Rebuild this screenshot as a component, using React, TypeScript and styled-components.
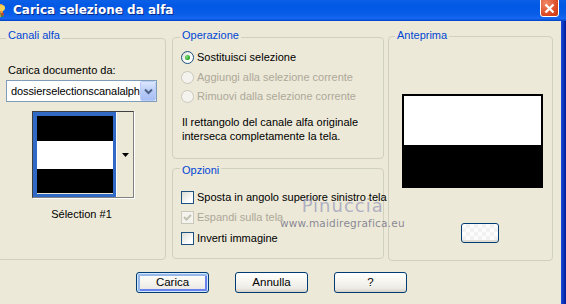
import styled, { createGlobalStyle } from "styled-components";

const GlobalStyle = createGlobalStyle`
  html, body {
    margin: 0;
    padding: 0;
    background: #ece9d8;
  }
  body {
    font-family: "Liberation Sans", Arial, sans-serif;
    font-size: 11px;
    color: #000;
  }
`;

const Window = styled.div`
  width: 566px;
  height: 304px;
  display: flex;
  flex-direction: column;
  overflow: hidden;
  position: relative;
  background: #ece9d8;
`;

const TitleBar = styled.div`
  height: 21px;
  flex: none;
  display: flex;
  align-items: flex-start;
  background: linear-gradient(
    to bottom,
    #0b5fe6 0%,
    #0058e4 30%,
    #0a5ee8 70%,
    #1667f2 88%,
    #0042c4 100%
  );
`;

const AppIcon = styled.svg`
  margin: 3px 0 0 -9px;
  flex: none;
`;

const Title = styled.span`
  margin: 3px 0 0 8px;
  font-family: "DejaVu Sans", "Liberation Sans", sans-serif;
  font-weight: bold;
  font-size: 12px;
  line-height: 15px;
  color: #fff;
  text-shadow: 1px 1px 0 #0a2a8a;
`;

const CloseButton = styled.div`
  margin: -3px 7px 0 auto;
  width: 19px;
  height: 20px;
  box-sizing: border-box;
  border: 1px solid #fff;
  border-radius: 3px;
  background: radial-gradient(circle at 30% 30%, #f08a6a, #d9441e 70%, #c23a18);
  display: flex;
  align-items: center;
  justify-content: center;
  padding-top: 3px;
`;

const Body = styled.div`
  flex: 1;
  display: flex;
`;

const Main = styled.div`
  flex: 1;
  display: flex;
  flex-direction: column;
`;

const RightFrame = styled.div`
  width: 5px;
  flex: none;
  background: linear-gradient(to right, #1a49d8, #0a2fb8 60%, #001a8c);
`;

const TopRow = styled.div`
  display: flex;
  align-items: flex-start;
`;

const Group = styled.div<{ $top: number; $left: number; $width: number; $height: number }>`
  box-sizing: border-box;
  margin-top: ${(p) => p.$top}px;
  margin-left: ${(p) => p.$left}px;
  width: ${(p) => p.$width}px;
  height: ${(p) => p.$height}px;
  border: 1px solid #d0d0bf;
  border-radius: 4px;
  display: flex;
  flex-direction: column;
  align-items: flex-start;
`;

const Legend = styled.div<{ $dy: number; $dx: number }>`
  margin-top: ${(p) => p.$dy}px;
  margin-left: ${(p) => p.$dx}px;
  padding: 0 2px;
  background: #ece9d8;
  color: #0046d5;
  line-height: 13px;
  white-space: nowrap;
`;

const Column = styled.div<{ $left: number }>`
  margin-left: ${(p) => p.$left}px;
  display: flex;
  flex-direction: column;
`;

const Label = styled.div<{ $top: number; $left: number }>`
  margin-top: ${(p) => p.$top}px;
  margin-left: ${(p) => p.$left}px;
  line-height: 13px;
  white-space: nowrap;
`;

const Select = styled.div`
  margin-top: 3px;
  margin-left: 8px;
  width: 151px;
  height: 22px;
  box-sizing: border-box;
  border: 1px solid #7f9db9;
  background: #fff;
  display: flex;
  align-items: center;
  overflow: hidden;
`;

const SelectText = styled.span`
  flex: 1;
  padding-left: 4px;
  white-space: nowrap;
  overflow: hidden;
  font-size: 11px;
  letter-spacing: -0.1px;
`;

const SelectButton = styled.div`
  width: 16px;
  height: 20px;
  flex: none;
  box-sizing: border-box;
  border: 1px solid #b9cdf8;
  border-radius: 2px;
  background: linear-gradient(to bottom, #dce6fd, #b4c9f7 60%, #a8bef4);
  display: flex;
  align-items: center;
  justify-content: center;
`;

const Thumb = styled.div`
  margin-top: 9px;
  margin-left: 34px;
  width: 102px;
  height: 87px;
  box-sizing: border-box;
  border: 1px solid;
  border-color: #404040 #808080 #808080 #404040;
  box-shadow: 1px 1px 0 #fff;
  display: flex;
`;

const ThumbItem = styled.div`
  width: 83px;
  box-sizing: border-box;
  border: 3px solid #316ac5;
  border-width: 4px 3px 3px 4px;
  display: flex;
  flex-direction: column;
`;

const Band = styled.div<{ $h: number; $c: string }>`
  height: ${(p) => p.$h}px;
  background: ${(p) => p.$c};
`;

const ThumbArrow = styled.div`
  flex: 1;
  display: flex;
  align-items: center;
  justify-content: center;
  border-left: 1px solid #fff;
  background: #ece9d8;
`;

const Caption = styled.div`
  margin-top: 10px;
  align-self: stretch;
  text-align: center;
  line-height: 13px;
`;

const Row = styled.div<{ $top: number }>`
  margin-top: ${(p) => p.$top}px;
  margin-left: 8px;
  display: flex;
  align-items: center;
  gap: 3px;
  height: 13px;
  white-space: nowrap;
`;

const RowText = styled.span<{ $disabled?: boolean }>`
  color: ${(p) => (p.$disabled ? "#aca899" : "#000")};
  line-height: 13px;
`;

const Radio = styled.span<{ $disabled?: boolean; $checked?: boolean }>`
  width: 13px;
  height: 13px;
  box-sizing: border-box;
  border-radius: 50%;
  border: 1px solid ${(p) => (p.$disabled ? "#cac8bb" : "#1c5180")};
  background: ${(p) =>
    p.$disabled
      ? "#f4f3ee"
      : "linear-gradient(135deg, #dcdcd6, #fff 70%)"};
  display: flex;
  align-items: center;
  justify-content: center;
  flex: none;

  &::after {
    content: "";
    display: ${(p) => (p.$checked ? "block" : "none")};
    width: 5px;
    height: 5px;
    border-radius: 50%;
    background: radial-gradient(circle at 35% 35%, #7de07d, #21a121 70%);
  }
`;

const Checkbox = styled.span<{ $disabled?: boolean }>`
  width: 13px;
  height: 13px;
  box-sizing: border-box;
  border: 1px solid ${(p) => (p.$disabled ? "#cac8bb" : "#1c5180")};
  background: ${(p) =>
    p.$disabled ? "#f4f3ee" : "linear-gradient(135deg, #dcdcd6, #fff 75%)"};
  display: flex;
  align-items: center;
  justify-content: center;
  flex: none;
`;

const Note = styled.div`
  margin-top: 12px;
  margin-left: 9px;
  line-height: 14px;
`;

const Preview = styled.div`
  margin-top: 52px;
  margin-left: 13px;
  width: 141px;
  height: 94px;
  box-sizing: border-box;
  border: 2px solid #000;
  background: #000;
  display: flex;
  flex-direction: column;
`;

const SmallButton = styled.div`
  margin-top: 35px;
  margin-left: 72px;
  width: 38px;
  height: 20px;
  box-sizing: border-box;
  border: 1px solid #003c74;
  border-radius: 3px;
  background:
    repeating-conic-gradient(#f2f2f2 0 25%, #fcfcfc 0 50%) 0 0 / 8px 8px,
    #fafafa;
  box-shadow: inset 0 -2px 0 #e0ded4;
`;

const ButtonRow = styled.div`
  padding-top: 11px;
  padding-left: 136px;
  display: flex;
  gap: 26px;
`;

const Button = styled.div<{ $default?: boolean }>`
  width: 73px;
  height: 21px;
  box-sizing: border-box;
  border: 1px solid #003c74;
  border-radius: 3px;
  background: linear-gradient(to bottom, #fff 0%, #f6f5f0 45%, #ecebe5 80%, #d6d0c5 100%);
  box-shadow: ${(p) =>
    p.$default
      ? "inset 0 0 0 1px #cee7ff, inset 1px 1px 0 2px #98b8ea, inset -1px -1px 0 2px #6982ee"
      : "none"};
  display: flex;
  align-items: center;
  justify-content: center;
  line-height: 13px;
  font-size: 11.5px;
`;

const Watermark = styled.div`
  position: absolute;
  left: 280px;
  top: 196px;
  display: flex;
  flex-direction: column;
  align-items: flex-end;
  pointer-events: none;
`;

const WatermarkName = styled.span`
  margin-right: 21px;
  font-family: "DejaVu Sans", sans-serif;
  font-size: 18px;
  letter-spacing: 1px;
  line-height: 20px;
  color: rgba(150, 150, 185, 0.7);
`;

const WatermarkUrl = styled.span`
  margin-top: 1px;
  font-family: "DejaVu Sans", sans-serif;
  font-size: 10.5px;
  line-height: 12px;
  color: rgba(110, 110, 130, 0.8);
  letter-spacing: 0.2px;
`;

const ChevronDown = () => (
  <svg width="9" height="7" viewBox="0 0 9 7">
    <path d="M1 1.5 L4.5 5 L8 1.5" fill="none" stroke="#4d6185" strokeWidth="2" />
  </svg>
);

const Triangle = () => (
  <svg width="7" height="4" viewBox="0 0 7 4">
    <path d="M0 0 H7 L3.5 4 Z" fill="#000" />
  </svg>
);

const Check = ({ color }: { color: string }) => (
  <svg width="9" height="9" viewBox="0 0 9 9">
    <path d="M1 4 L3.5 6.5 L8 2" fill="none" stroke={color} strokeWidth="2" />
  </svg>
);

export default function App() {
  return (
    <>
      <GlobalStyle />
      <Window>
        <TitleBar>
          <AppIcon width="14" height="15" viewBox="0 0 14 15">
            <rect x="2" y="1" width="10" height="13" rx="2" fill="#e8a040" />
            <circle cx="11" cy="5" r="3" fill="#f4d35a" />
            <path d="M9 9 L13 14 L10 14 Z" fill="#3b8a3a" />
            <circle cx="11.5" cy="11" r="1.5" fill="#d04030" />
          </AppIcon>
          <Title>Carica selezione da alfa</Title>
          <CloseButton>
            <svg width="11" height="11" viewBox="0 0 11 11">
              <path d="M1.5 1.5 L9.5 9.5 M9.5 1.5 L1.5 9.5" stroke="#fff" strokeWidth="2.2" />
            </svg>
          </CloseButton>
        </TitleBar>
        <Body>
          <Main>
            <TopRow>
              <Group $top={17} $left={-3} $width={169} $height={222}>
                <Legend $dy={-10} $dx={8}>Canali alfa</Legend>
                <Label $top={22} $left={10}>Carica documento da:</Label>
                <Select>
                  <SelectText>dossierselectionscanalalph</SelectText>
                  <SelectButton>
                    <ChevronDown />
                  </SelectButton>
                </Select>
                <Thumb>
                  <ThumbItem>
                    <Band $h={25} $c="#000" />
                    <Band $h={28} $c="#fff" />
                    <Band $h={24} $c="#000" />
                  </ThumbItem>
                  <ThumbArrow>
                    <Triangle />
                  </ThumbArrow>
                </Thumb>
                <Caption>Sélection #1</Caption>
              </Group>

              <Column $left={6}>
                <Group $top={16} $left={0} $width={212} $height={122}>
                  <Legend $dy={-9} $dx={7}>Operazione</Legend>
                  <Row $top={9}>
                    <Radio $checked />
                    <RowText>Sostituisci selezione</RowText>
                  </Row>
                  <Row $top={7}>
                    <Radio $disabled />
                    <RowText $disabled>Aggiungi alla selezione corrente</RowText>
                  </Row>
                  <Row $top={6}>
                    <Radio $disabled />
                    <RowText $disabled>Rimuovi dalla selezione corrente</RowText>
                  </Row>
                  <Note>
                    Il rettangolo del canale alfa originale
                    <br />
                    interseca completamente la tela.
                  </Note>
                </Group>

                <Group $top={9} $left={0} $width={212} $height={91}>
                  <Legend $dy={-5} $dx={7}>Opzioni</Legend>
                  <Row $top={14}>
                    <Checkbox />
                    <RowText>Sposta in angolo superiore sinistro tela</RowText>
                  </Row>
                  <Row $top={7}>
                    <Checkbox $disabled>
                      <Check color="#c3c1b2" />
                    </Checkbox>
                    <RowText $disabled>Espandi sulla tela</RowText>
                  </Row>
                  <Row $top={8}>
                    <Checkbox />
                    <RowText>Inverti immagine</RowText>
                  </Row>
                </Group>
              </Column>

              <Group $top={15} $left={4} $width={165} $height={225}>
                <Legend $dy={-8} $dx={6}>Anteprima</Legend>
                <Preview>
                  <Band $h={49} $c="#fff" />
                </Preview>
                <SmallButton />
              </Group>
            </TopRow>

            <ButtonRow>
              <Button $default>Carica</Button>
              <Button>Annulla</Button>
              <Button>?</Button>
            </ButtonRow>
          </Main>
          <RightFrame />
        </Body>
        <Watermark>
          <WatermarkName>Pinuccia</WatermarkName>
          <WatermarkUrl>www.maidiregrafica.eu</WatermarkUrl>
        </Watermark>
      </Window>
    </>
  );
}
